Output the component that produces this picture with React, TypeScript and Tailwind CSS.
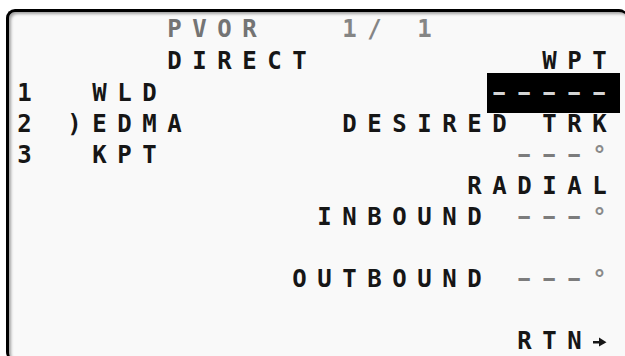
import React from "react";

// one character per 25px cell, glyph centred – same grid as the CDU page
function Cells({ text, className = "" }: { text: string; className?: string }) {
  return (
    <>
      {Array.from(text).map((ch, i) => (
        <span key={i} className={`w-[25px] shrink-0 text-center ${className}`}>
          {ch === " " ? "\u00a0" : ch}
        </span>
      ))}
    </>
  );
}

// dashes are shorter than a full cell on the CDU
function Dashes({ n, className = "" }: { n: number; className?: string }) {
  return (
    <>
      {Array.from({ length: n }).map((_, i) => (
        <span key={i} className={`w-[25px] shrink-0 text-center ${className}`}>
          <span className="inline-block scale-x-[0.78]">–</span>
        </span>
      ))}
    </>
  );
}

function Row({ h = "h-[31px]", children }: { h?: string; children?: React.ReactNode }) {
  return <div className={`flex items-center ${h}`}>{children}</div>;
}

function Blank({ n }: { n: number }) {
  return <Cells text={" ".repeat(n)} />;
}

function EmptyCourse() {
  return (
    <>
      <Dashes n={3} className="text-[#7c7c7c] -translate-y-[1px]" />
      <Cells text="°" className="text-[#8a8a8a]" />
    </>
  );
}

export default function App() {
  return (
    <div className="w-[625px] h-[356px] bg-white overflow-hidden font-['DejaVu_Sans_Mono',monospace] font-bold text-[24px] leading-[31px] text-[#161616]">
      <div className="ml-[6px] mt-[9px] w-[622px] h-[352px] rounded-[9px] border-t-[3px] border-l-[3px] border-r border-b border-t-black border-l-black border-r-[#c8c8c8] border-b-[#c8c8c8] bg-[#f9f9f9] shadow-[inset_2px_2px_3px_rgba(0,0,0,0.35)] pl-[3px] pt-[1px]">
        {/* title */}
        <Row h="h-[32px]">
          <Blank n={6} />
          <Cells text="PVOR" className="text-[#747474]" />
          <Blank n={3} />
          <Cells text="1/ 1" className="text-[#858585]" />
        </Row>

        <Row h="h-[32px]">
          <Blank n={6} />
          <Cells text="DIRECT" />
          <Blank n={9} />
          <Cells text="WPT" />
        </Row>

        <Row h="h-[32px]">
          <Cells text="1  WLD" />
          <Blank n={13} />
          <div className="flex items-center h-[40px] w-[133px] shrink-0 bg-black text-[#d4d4d4]">
            <Dashes n={5} className="-translate-y-[1px]" />
          </div>
        </Row>

        <Row>
          <Cells text="2 )EDMA" />
          <Blank n={6} />
          <Cells text="DESIRED TRK" />
        </Row>

        <Row>
          <Cells text="3  KPT" />
          <Blank n={14} />
          <EmptyCourse />
        </Row>

        <Row>
          <Blank n={18} />
          <Cells text="RADIAL" />
        </Row>

        <Row>
          <Blank n={12} />
          <Cells text="INBOUND " />
          <EmptyCourse />
        </Row>

        <Row />

        <Row>
          <Blank n={11} />
          <Cells text="OUTBOUND " />
          <EmptyCourse />
        </Row>

        <Row />

        <Row>
          <Blank n={20} />
          <Cells text="RTN" />
          <span className="w-[25px] shrink-0 flex justify-center">
            <svg width="14" height="10" viewBox="0 0 14 10">
              <rect x="0" y="4" width="7" height="2.5" fill="#161616" />
              <path d="M6 0.5 L13.5 5.2 L6 9.5 Z" fill="#161616" />
            </svg>
          </span>
        </Row>
      </div>
    </div>
  );
}
